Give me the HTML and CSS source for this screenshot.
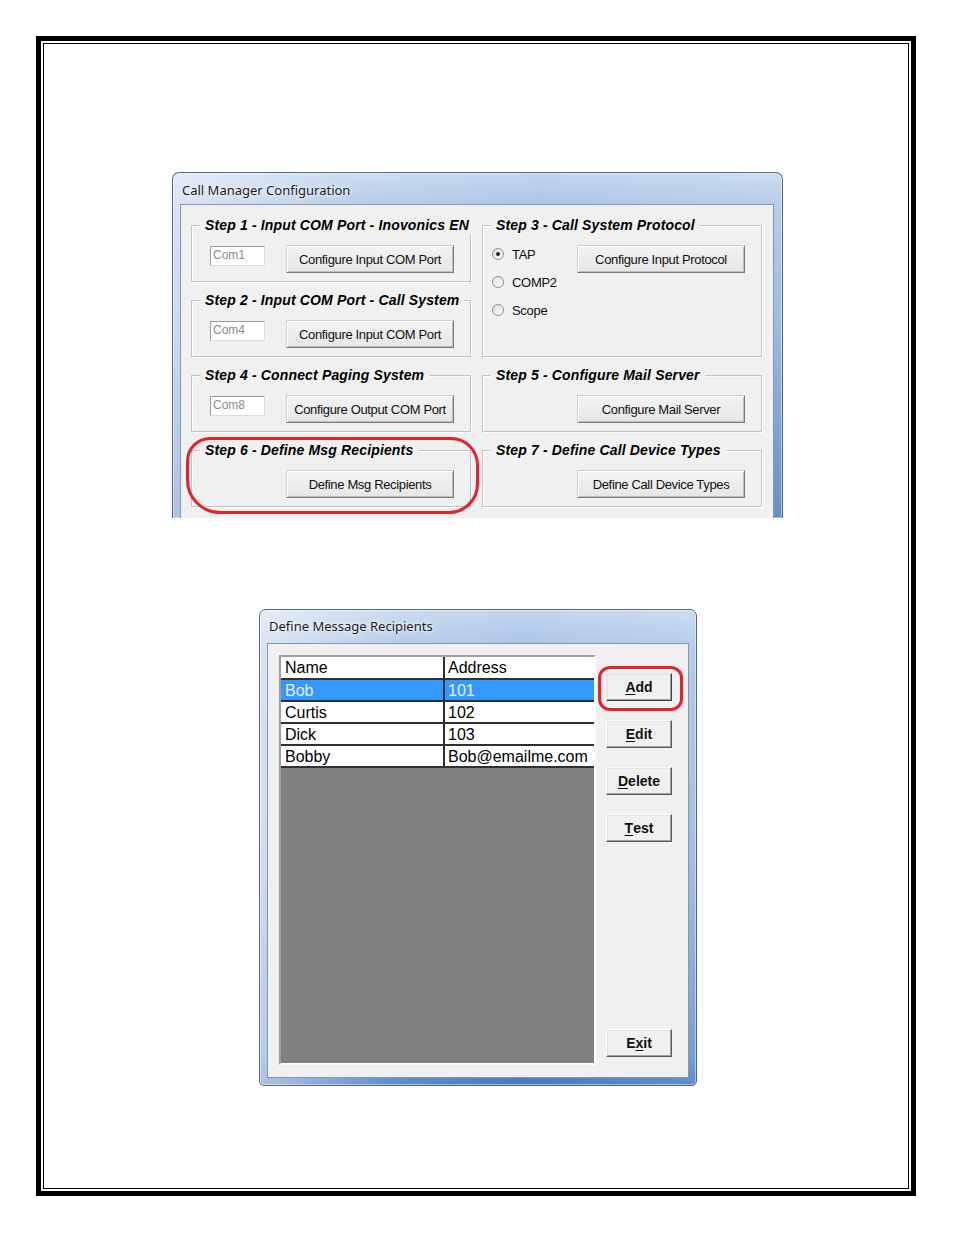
FILE: index.html
```html
<!DOCTYPE html>
<html>
<head>
<meta charset="utf-8">
<title>Call Manager Configuration</title>
<link rel="stylesheet" href="styles.css">
</head>
<body>
<div class="sheet">
  <div class="sheet-inner">

    <div class="dlg dlg-cfg">
      <div class="dlg-title">Call Manager Configuration</div>
      <div class="dlg-client cfg-client">
        <div class="cfg-grid">
          <div class="group g1">
            <div class="legend">Step 1 - Input COM Port - Inovonics EN</div>
            <div class="g-row"><div class="field">Com1</div><div class="btn">Configure Input COM Port</div></div>
          </div>
          <div class="group g2">
            <div class="legend">Step 2 - Input COM Port - Call System</div>
            <div class="g-row"><div class="field">Com4</div><div class="btn">Configure Input COM Port</div></div>
          </div>
          <div class="group g3">
            <div class="legend">Step 3 - Call System Protocol</div>
            <div class="g-row">
              <div class="radios">
                <div class="radio-row"><span class="radio checked"></span><span class="radio-label">TAP</span></div>
                <div class="radio-row"><span class="radio"></span><span class="radio-label">COMP2</span></div>
                <div class="radio-row"><span class="radio"></span><span class="radio-label">Scope</span></div>
              </div>
              <div class="btn">Configure Input Protocol</div>
            </div>
          </div>
          <div class="group g4">
            <div class="legend">Step 4 - Connect Paging System</div>
            <div class="g-row"><div class="field">Com8</div><div class="btn">Configure Output COM Port</div></div>
          </div>
          <div class="group g5">
            <div class="legend">Step 5 - Configure Mail Server</div>
            <div class="g-row"><div class="btn">Configure Mail Server</div></div>
          </div>
          <div class="group g6">
            <div class="legend">Step 6 - Define Msg Recipients</div>
            <div class="g-row"><div class="btn">Define Msg Recipients</div></div>
          </div>
          <div class="group g7">
            <div class="legend">Step 7 - Define Call Device Types</div>
            <div class="g-row"><div class="btn">Define Call Device Types</div></div>
          </div>
        </div>
      </div>
      <div class="mark mark-step6"></div>
    </div>

    <div class="dlg dlg-rcp">
      <div class="dlg-title">Define Message Recipients</div>
      <div class="dlg-client rcp-client">
        <div class="listview">
          <div class="lv-row lv-head"><div class="lv-cell c1">Name</div><div class="lv-cell c2">Address</div></div>
          <div class="lv-row sel"><div class="lv-cell c1">Bob</div><div class="lv-cell c2">101</div></div>
          <div class="lv-row"><div class="lv-cell c1">Curtis</div><div class="lv-cell c2">102</div></div>
          <div class="lv-row"><div class="lv-cell c1">Dick</div><div class="lv-cell c2">103</div></div>
          <div class="lv-row"><div class="lv-cell c1">Bobby</div><div class="lv-cell c2">Bob@emailme.com</div></div>
          <div class="lv-empty"></div>
        </div>
        <div class="btn-col">
          <div class="cbtn cbtn-default"><u>A</u>dd</div>
          <div class="cbtn"><u>E</u>dit</div>
          <div class="cbtn"><u>D</u>elete</div>
          <div class="cbtn"><u>T</u>est</div>
          <div class="cbtn cbtn-exit">E<u>x</u>it</div>
        </div>
      </div>
      <div class="mark mark-add"></div>
    </div>

  </div>
</div>
</body>
</html>
```

FILE: styles.css
```css
* { box-sizing: border-box; }

body {
  margin: 0;
  background: #ffffff;
  font-family: "Liberation Sans", Arial, sans-serif;
  color: #000;
}

.sheet {
  margin: 36px 0 0 36px;
  width: 880px;
  height: 1160px;
  border: 5px solid #000;
  padding: 2px;
}

.sheet-inner {
  height: 100%;
  border: 1px solid #000;
  overflow: hidden;
}

/* ---------- Windows 7 style dialog frames ---------- */
.dlg {
  position: relative;
  display: flex;
  flex-direction: column;
  border: 1px solid #56677e;
  border-radius: 7px 7px 0 0;
  box-shadow: inset 0 0 0 1px rgba(255,255,255,0.45);
}

.dlg-title {
  flex: none;
  font-family: "Noto Sans", "Open Sans", sans-serif;
  font-size: 13px;
  line-height: 17px;
  color: #1a1a1a;
  padding-left: 2px;
  text-shadow: 0 0 6px rgba(255,255,255,0.95), 0 0 3px rgba(255,255,255,0.9);
  white-space: nowrap;
}

.dlg-client {
  flex: 1;
  background: #f0f0f0;
  border: 1px solid #8396b0;
  overflow: hidden;
}

.dlg-cfg {
  margin: 128px 0 0 128px;
  width: 611px;
  height: 346px;
  border-bottom: none;
  padding: 0 8px 0 7px;
  overflow: hidden;
  background:
    linear-gradient(90deg, rgba(255,255,255,0.55) 0%, rgba(255,255,255,0.15) 30%, rgba(255,255,255,0) 60%, rgba(255,255,255,0.15) 100%),
    linear-gradient(180deg, #c3d6ee 0%, #a9c3e6 10%, #8cafdc 45%, #4a7bc0 100%);
}

.dlg-cfg .dlg-title {
  height: 31px;
  padding-top: 9px;
}

.dlg-cfg .dlg-client {
  border-bottom: none;
}

.dlg-rcp {
  margin: 91px 0 0 215px;
  width: 438px;
  height: 477px;
  border-radius: 7px 7px 5px 5px;
  padding: 0 7px 7px 7px;
  background:
    linear-gradient(90deg, rgba(255,255,255,0.55) 0%, rgba(255,255,255,0.15) 30%, rgba(255,255,255,0) 60%, rgba(255,255,255,0.15) 100%),
    linear-gradient(180deg, #c3d6ee 0%, #a9c3e6 8%, #90b1dd 55%, #5f8fd2 94%, #4677bd 100%);
}

.dlg-rcp .dlg-title {
  height: 33px;
  padding-top: 8px;
}

/* ---------- Config dialog content ---------- */
.cfg-client {
  padding: 20px 11px 0 10px;
}

.cfg-grid {
  display: grid;
  grid-template-columns: 280px 280px;
  grid-template-rows: 57px 57px 57px 57px;
  column-gap: 11px;
  row-gap: 18px;
}

.g1 { grid-column: 1; grid-row: 1; }
.g2 { grid-column: 1; grid-row: 2; }
.g3 { grid-column: 2; grid-row: 1 / span 2; }
.g4 { grid-column: 1; grid-row: 3; }
.g5 { grid-column: 2; grid-row: 3; }
.g6 { grid-column: 1; grid-row: 4; }
.g7 { grid-column: 2; grid-row: 4; }

.group {
  border: 1px solid #c2c2c2;
  box-shadow: inset 1px 1px 0 #ffffff, 1px 1px 0 #ffffff;
  padding: 0 16px 0 18px;
}

.legend {
  width: fit-content;
  height: 17px;
  margin: -9px 0 0 -10px;
  padding: 0 5px;
  background: #f0f0f0;
  font-size: 14px;
  line-height: 17px;
  font-weight: bold;
  font-style: italic;
  letter-spacing: 0.15px;
  white-space: nowrap;
  color: #000;
}

.g-row {
  display: flex;
  align-items: flex-start;
  margin-top: 11px;
}

.field {
  width: 55px;
  height: 20px;
  margin-top: 1px;
  background: #ffffff;
  border: 1px solid;
  border-color: #9c9c9c #dcdcdc #dcdcdc #9c9c9c;
  font-size: 12px;
  line-height: 17px;
  padding-left: 2px;
  color: #8c8c8c;
}

.btn {
  width: 168px;
  height: 28px;
  margin-left: auto;
  display: flex;
  align-items: center;
  justify-content: center;
  font-size: 13px;
  letter-spacing: -0.35px;
  color: #111;
  white-space: nowrap;
  background: linear-gradient(180deg, #f3f3f3, #e6e6e6);
  border: 1px solid;
  border-color: #cfcfcf #7a7a7a #7a7a7a #cfcfcf;
  box-shadow: inset 1px 1px 0 #ffffff, inset -1px -1px 0 #bdbdbd;
}

.radios {
  display: flex;
  flex-direction: column;
  gap: 8px;
  margin: -1px 0 0 -9px;
}

.radio-row {
  display: flex;
  align-items: center;
  height: 20px;
  gap: 8px;
}

.radio {
  width: 12px;
  height: 12px;
  border-radius: 50%;
  border: 1px solid #8f8f8f;
  background: linear-gradient(135deg, #dcdcdc, #ffffff);
  display: flex;
  align-items: center;
  justify-content: center;
}

.radio.checked::after {
  content: "";
  width: 4px;
  height: 4px;
  border-radius: 50%;
  background: #222;
}

.radio-label {
  font-size: 13px;
  letter-spacing: -0.3px;
  color: #111;
}

/* ---------- Recipients dialog content ---------- */
.rcp-client {
  display: flex;
  align-items: flex-start;
  padding: 11px 16px 0 11px;
  gap: 10px;
}

.listview {
  width: 317px;
  height: 410px;
  display: flex;
  flex-direction: column;
  border: 2px solid;
  border-color: #a0a0a0 #ffffff #ffffff #a0a0a0;
  background: #808080;
}

.lv-row {
  display: flex;
  height: 22px;
  background: #ffffff;
  font-size: 16px;
  line-height: 21px;
  color: #000;
}

.lv-head {
  height: 23px;
  line-height: 22px;
}

.lv-cell {
  border-bottom: 2px solid #303030;
  white-space: nowrap;
  overflow: hidden;
}

.lv-cell.c1 {
  width: 164px;
  border-right: 2px solid #303030;
  padding-left: 4px;
}

.lv-cell.c2 {
  width: 149px;
  padding-left: 3px;
}

.lv-row.sel .lv-cell {
  background: #3399ff;
  color: #e8f3ff;
}

.lv-empty {
  flex: 1;
  background: #808080;
}

.btn-col {
  height: 410px;
  display: flex;
  flex-direction: column;
  gap: 19px;
  padding: 18px 0 8px;
}

.cbtn {
  width: 66px;
  height: 28px;
  display: flex;
  align-items: center;
  justify-content: center;
  font-size: 14px;
  font-weight: bold;
  color: #111;
  background: #f0f0f0;
  border: 1px solid;
  border-color: #ffffff #5a5a5a #5a5a5a #ffffff;
  box-shadow: inset -1px -1px 0 #a0a0a0, inset 1px 1px 0 #e3e3e3;
}

.cbtn u {
  text-decoration-thickness: 1px;
  text-underline-offset: 2px;
}

.cbtn-default {
  border-color: #e8e8e8 #404040 #404040 #e8e8e8;
}

.cbtn-exit {
  margin-top: auto;
}

/* ---------- red annotation marks ---------- */
.mark {
  position: absolute;
  border: 3px solid #e3222c;
  pointer-events: none;
}

.mark-step6 {
  left: 13px;
  top: 264px;
  width: 293px;
  height: 77px;
  border-radius: 24px 28px 30px 34px;
}

.mark-add {
  left: 338px;
  top: 56px;
  width: 85px;
  height: 45px;
  border-radius: 12px;
}
```
